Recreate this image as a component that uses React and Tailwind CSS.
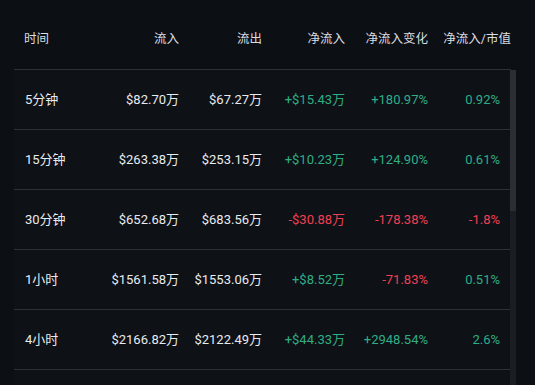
import React from "react";

const up = "text-[#2fae86]";
const down = "text-[#ee4055]";

const rows = [
  { t: "5分钟", i: "$82.70万", o: "$67.27万", n: "+$15.43万", c: "+180.97%", r: "0.92%", nu: true, cu: true, ru: true },
  { t: "15分钟", i: "$263.38万", o: "$253.15万", n: "+$10.23万", c: "+124.90%", r: "0.61%", nu: true, cu: true, ru: true },
  { t: "30分钟", i: "$652.68万", o: "$683.56万", n: "-$30.88万", c: "-178.38%", r: "-1.8%", nu: false, cu: false, ru: false },
  { t: "1小时", i: "$1561.58万", o: "$1553.06万", n: "+$8.52万", c: "-71.83%", r: "0.51%", nu: true, cu: false, ru: true },
  { t: "4小时", i: "$2166.82万", o: "$2122.49万", n: "+$44.33万", c: "+2948.54%", r: "2.6%", nu: true, cu: true, ru: true },
];

const cols = "grid grid-cols-[82px_83px_83px_83px_83px_1fr]";

export default function App() {
  return (
    <div
      className="w-[535px] h-[385px] overflow-hidden bg-[#0c0f13] pl-[14px] text-[13px] text-[#e8ebef]"
      style={{ fontFamily: 'Roboto, "Noto Sans CJK SC", sans-serif' }}
    >
      {/* header */}
      <div className={`${cols} w-[497px] h-[70px] pt-[10px] items-center border-b border-[#2c3037] text-[12.5px] text-[#d9dee4]`}>
        <div className="pl-[10px]">时间</div>
        <div className="text-right">流入</div>
        <div className="text-right">流出</div>
        <div className="text-right">净流入</div>
        <div className="text-right">净流入变化</div>
        <div className="text-right">净流入/市值</div>
      </div>

      {/* body */}
      <div className="flex h-[315px]">
        <div className="w-[496px] bg-[#0e1116]">
          {rows.map((row) => (
            <div key={row.t} className={`${cols} h-[60px] items-center border-b border-[#2c3037]`}>
              <div className="pl-[11px]">{row.t}</div>
              <div className="text-right">{row.i}</div>
              <div className="text-right">{row.o}</div>
              <div className={`text-right ${row.nu ? up : down}`}>{row.n}</div>
              <div className={`text-right ${row.cu ? up : down}`}>{row.c}</div>
              <div className={`text-right pr-[10px] ${row.ru ? up : down}`}>{row.r}</div>
            </div>
          ))}
        </div>
        <div className="w-[6px] bg-[#1a1d22] flex flex-col">
          <div className="h-[141px] bg-[#2b2e34]" />
        </div>
      </div>
    </div>
  );
}
